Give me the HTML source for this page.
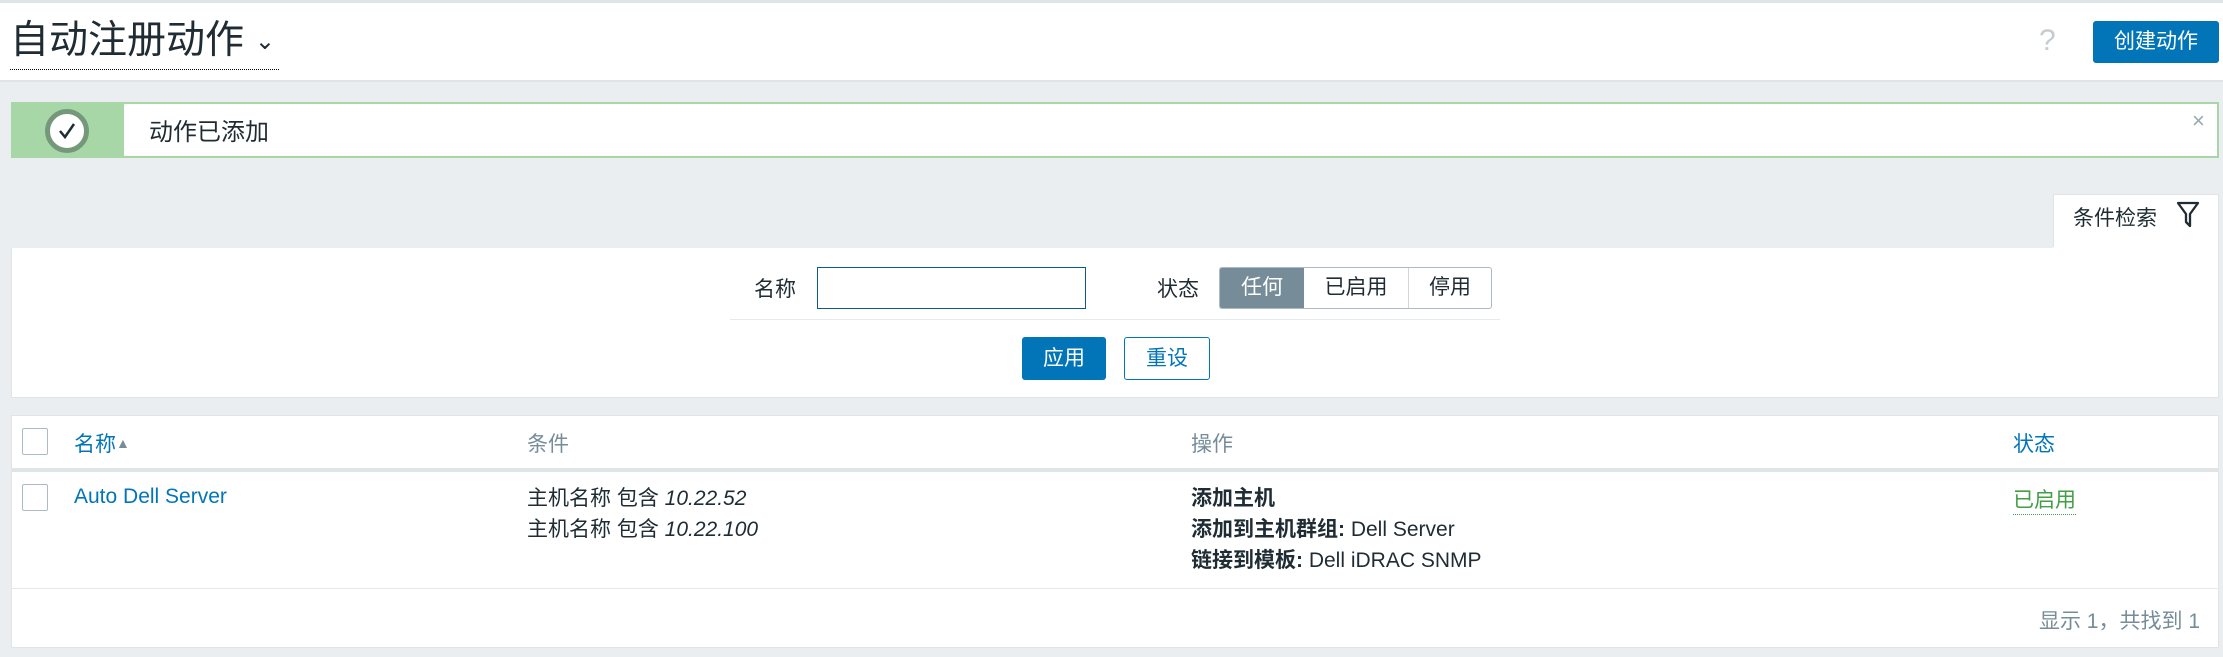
<!DOCTYPE html>
<html><head><meta charset="utf-8"><style>
*{box-sizing:border-box;margin:0;padding:0}
body{width:2223px;height:657px;background:#ebeef0;font-family:"Liberation Sans","Noto Sans CJK SC",sans-serif;color:#1f2c33;position:relative;overflow:hidden;font-size:21px}
.abs{position:absolute}
.hdr{left:0;top:0;width:2223px;height:82px;background:#fff;border-top:3px solid #dfe4e7;border-bottom:2px solid #e0e4e7}
.blue{color:#0275b8}
.cb{position:absolute;width:26px;height:27px;border:1px solid #acbbc2;border-radius:2px;background:#fff}
</style></head><body>
<div class="abs hdr"></div>
<div class="abs" style="left:10px;top:18px;font-size:39px;line-height:46px;color:#1f2c33;border-bottom:1px dotted #000;padding-right:4px">自动注册动作 <span style="font-size:24px;position:relative;top:-4px">&#8964;</span></div>
<div class="abs" style="left:2039px;top:24px;font-size:30px;color:#c4ccd0">?</div>
<div class="abs" style="left:2093px;top:21px;width:126px;height:42px;background:#0275b8;border-radius:3px;color:#fff;font-size:21px;line-height:42px;text-align:center">创建动作</div>

<div class="abs" style="left:11px;top:102px;width:2208px;height:56px;border:2px solid #a7d7a6;background:#fff"></div>
<div class="abs" style="left:11px;top:102px;width:113px;height:56px;background:#a7d7a6;border-radius:2px 0 0 2px"></div>
<div class="abs" style="left:45px;top:109px;width:44px;height:44px;border-radius:50%;background:#fff;border:5px solid #76987a"></div>
<svg class="abs" style="left:54px;top:120px" width="26" height="22"><path d="M6 11 L11 17 L20 4" fill="none" stroke="#1f2c33" stroke-width="2.5"/></svg>
<div class="abs" style="left:149px;top:112px;font-size:24px">动作已添加</div>
<div class="abs" style="left:2192px;top:108px;font-size:22px;color:#9aa7ae">×</div>

<div class="abs" style="left:2053px;top:194px;width:166px;height:56px;background:#fff;border:1px solid #dfe4e7;border-bottom:none"></div>
<div class="abs" style="left:2073px;top:202px;font-size:21px">条件检索</div>
<svg class="abs" style="left:2176px;top:200px" width="24" height="30"><path d="M2 3 H22 L14 14 V26 L10 22 V14 Z" fill="none" stroke="#1f2c33" stroke-width="2.3" stroke-linejoin="round"/></svg>
<div class="abs" style="left:11px;top:248px;width:2208px;height:150px;background:#fff;border:1px solid #dfe4e7;border-top:none"></div>
<div class="abs" style="left:2053px;top:247px;width:165px;height:3px;background:#fff"></div>
<div class="abs" style="left:754px;top:273px;font-size:21px">名称</div>
<div class="abs" style="left:817px;top:267px;width:269px;height:42px;border:1px solid #0f5a8c"></div>
<div class="abs" style="left:1157px;top:273px;font-size:21px">状态</div>
<div class="abs" style="left:1219px;top:267px;width:273px;height:42px;border:1px solid #acbbc2;border-radius:3px;display:flex;font-size:21px;line-height:40px;text-align:center;overflow:hidden">
<div style="width:84px;background:#768d99;color:#fff">任何</div>
<div style="width:105px;border-right:1px solid #cfd7db">已启用</div>
<div style="flex:1">停用</div></div>
<div class="abs" style="left:730px;top:319px;width:770px;height:1px;background:#e7eaec"></div>
<div class="abs" style="left:1022px;top:337px;width:84px;height:43px;background:#0275b8;color:#fff;border-radius:3px;font-size:21px;line-height:43px;text-align:center">应用</div>
<div class="abs" style="left:1124px;top:337px;width:86px;height:43px;border:1px solid #0275b8;color:#0275b8;border-radius:3px;font-size:21px;line-height:41px;text-align:center">重设</div>

<div class="abs" style="left:11px;top:415px;width:2208px;height:233px;background:#fff;border:1px solid #dfe4e7"></div>
<div class="abs" style="left:11px;top:468px;width:2208px;height:4px;background:#dfe4e7"></div>
<div class="abs" style="left:11px;top:588px;width:2208px;height:1px;background:#e6e9eb"></div>
<div class="cb" style="left:22px;top:428px"></div>
<div class="abs blue" style="left:74px;top:428px;font-size:21px">名称<span style="color:#768d99;font-size:14px;position:relative;top:-3px">▲</span></div>
<div class="abs" style="left:527px;top:428px;font-size:21px;color:#768d99">条件</div>
<div class="abs" style="left:1191px;top:428px;font-size:21px;color:#768d99">操作</div>
<div class="abs blue" style="left:2013px;top:428px;font-size:21px">状态</div>
<div class="cb" style="left:22px;top:484px"></div>
<div class="abs blue" style="left:74px;top:485px">Auto Dell Server</div>
<div class="abs" style="left:527px;top:483px;line-height:31px">主机名称 包含 <i>10.22.52</i><br>主机名称 包含 <i>10.22.100</i></div>
<div class="abs" style="left:1191px;top:483px;line-height:31px"><b>添加主机</b><br><b>添加到主机群组:</b> Dell Server<br><b>链接到模板:</b> Dell iDRAC SNMP</div>
<div class="abs" style="left:2013px;top:484px;color:#429e47;border-bottom:1px dotted #429e47;font-size:21px">已启用</div>
<div class="abs" style="left:1900px;top:605px;width:300px;text-align:right;color:#768d99;font-size:21px">显示 1，共找到 1</div>
</body></html>
